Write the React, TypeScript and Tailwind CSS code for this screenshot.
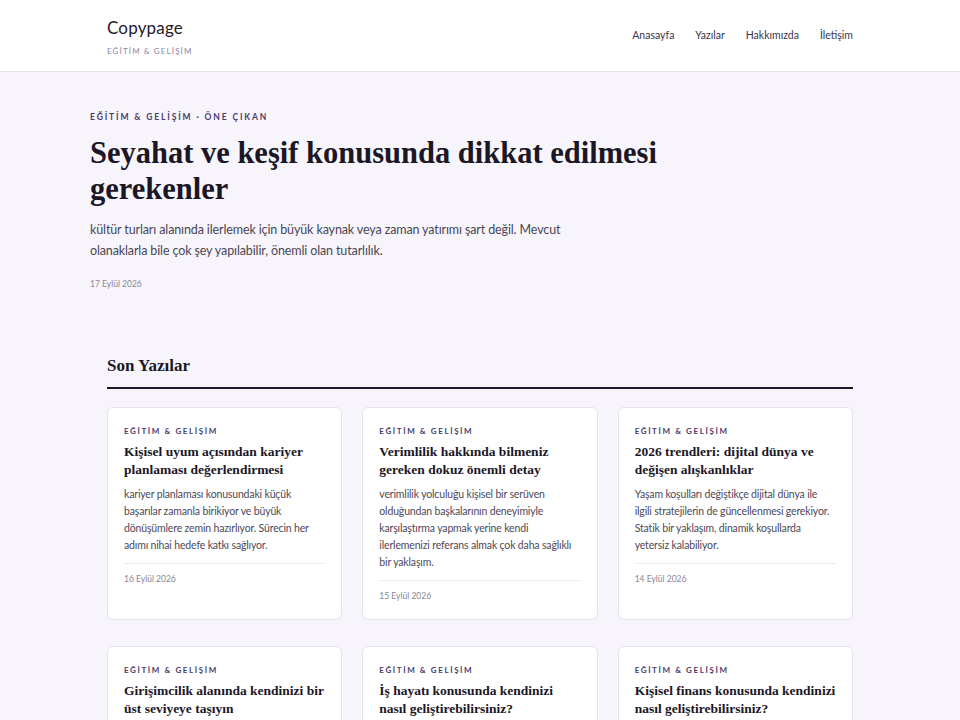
import React from 'react';

interface Post {
  title: string;
  excerpt: string;
  date: string;
}

const posts: Post[] = [
  {
    title: 'Kişisel uyum açısından kariyer planlaması değerlendirmesi',
    excerpt:
      'kariyer planlaması konusundaki küçük başarılar zamanla birikiyor ve büyük dönüşümlere zemin hazırlıyor. Sürecin her adımı nihai hedefe katkı sağlıyor.',
    date: '16 Eylül 2026',
  },
  {
    title: 'Verimlilik hakkında bilmeniz gereken dokuz önemli detay',
    excerpt:
      'verimlilik yolculuğu kişisel bir serüven olduğundan başkalarının deneyimiyle karşılaştırma yapmak yerine kendi ilerlemenizi referans almak çok daha sağlıklı bir yaklaşım.',
    date: '15 Eylül 2026',
  },
  {
    title: '2026 trendleri: dijital dünya ve değişen alışkanlıklar',
    excerpt:
      'Yaşam koşulları değiştikçe dijital dünya ile ilgili stratejilerin de güncellenmesi gerekiyor. Statik bir yaklaşım, dinamik koşullarda yetersiz kalabiliyor.',
    date: '14 Eylül 2026',
  },
  {
    title: 'Girişimcilik alanında kendinizi bir üst seviyeye taşıyın',
    excerpt:
      'girişimcilik konusunda sabırlı olmak, hızlı sonuç beklemekten çok daha verimli bir strateji olarak öne çıkıyor.',
    date: '13 Eylül 2026',
  },
  {
    title: 'İş hayatı konusunda kendinizi nasıl geliştirebilirsiniz?',
    excerpt:
      'iş hayatı alanında ilerlemek için küçük ama düzenli adımlar atmak, büyük hamlelerden daha kalıcı sonuçlar doğuruyor.',
    date: '12 Eylül 2026',
  },
  {
    title: 'Kişisel finans konusunda kendinizi nasıl geliştirebilirsiniz?',
    excerpt:
      'kişisel finans yönetiminde tutarlılık, kısa vadeli kazançlardan çok daha önemli bir rol oynuyor.',
    date: '11 Eylül 2026',
  },
];

const sans = 'font-["Lato","Noto_Sans",sans-serif]';
const serif = 'font-["Liberation_Serif","Times_New_Roman",serif]';

const PostCard: React.FC<{ post: Post }> = ({ post }) => (
  <article className="bg-white border border-[#e6e2ee] rounded-md px-4 pt-[17px] pb-4">
    <p className="text-[8px] font-bold tracking-[0.2em] text-[#4b3b6b] uppercase">EĞİTİM &amp; GELİŞİM</p>
    <h3 className={`${serif} mt-[6px] text-[13.5px] leading-[18px] font-bold text-[#1c1726]`}>{post.title}</h3>
    <p className="mt-[7px] text-[10.5px] leading-[17px] tracking-[-0.015em] text-[#4d4858]">{post.excerpt}</p>
    <div className="mt-[9px] pt-[9px] border-t border-[#ebe8f0]">
      <p className="text-[8.5px] text-[#8a8596]">{post.date}</p>
    </div>
  </article>
);

export default function App() {
  return (
    <div className={`${sans} min-h-screen bg-[#f7f5fb] text-[#1c1726]`}>
      <header className="bg-white border-b border-[#e4e0ea]">
        <div className="max-w-[746px] mx-auto h-[71px] flex items-center justify-between">
          <div className="pt-1">
            <div className="text-[17px] leading-5 text-[#1f1a2a] tracking-[0.01em]">Copypage</div>
            <div className="mt-[7px] text-[8px] tracking-[0.14em] text-[#8b85a0]">EĞİTİM &amp; GELİŞİM</div>
          </div>
          <nav className="flex items-center gap-[21px] text-[10.5px] text-[#3b3548]">
            <a>Anasayfa</a>
            <a>Yazılar</a>
            <a>Hakkımızda</a>
            <a>İletişim</a>
          </nav>
        </div>
      </header>

      <section className="max-w-[780px] mx-auto pt-[39px] pb-[62px]">
        <p className="text-[8.5px] font-bold tracking-[0.22em] text-[#4b3b6b]">EĞİTİM &amp; GELİŞİM · ÖNE ÇIKAN</p>
        <h1 className={`${serif} mt-[11px] max-w-[600px] text-[30.5px] leading-[36px] font-bold text-[#1c1726]`}>
          Seyahat ve keşif konusunda dikkat edilmesi gerekenler
        </h1>
        <p className="mt-[12px] max-w-[490px] text-[12.5px] leading-[21px] tracking-[-0.01em] text-[#4a4556]">
          kültür turları alanında ilerlemek için büyük kaynak veya zaman yatırımı şart değil. Mevcut olanaklarla bile çok şey yapılabilir, önemli olan tutarlılık.
        </p>
        <p className="mt-[17px] text-[8.5px] text-[#8a8596]">17 Eylül 2026</p>
      </section>

      <section className="max-w-[746px] mx-auto pb-10">
        <h2 className={`${serif} text-[17px] font-bold text-[#1c1726] pb-[9px] border-b-2 border-[#1f1a2a]`}>Son Yazılar</h2>
        <div className="mt-[18px] grid grid-cols-3 gap-x-5 gap-y-[26px]">
          {posts.map((p) => (
            <PostCard key={p.title} post={p} />
          ))}
        </div>
      </section>
    </div>
  );
}
